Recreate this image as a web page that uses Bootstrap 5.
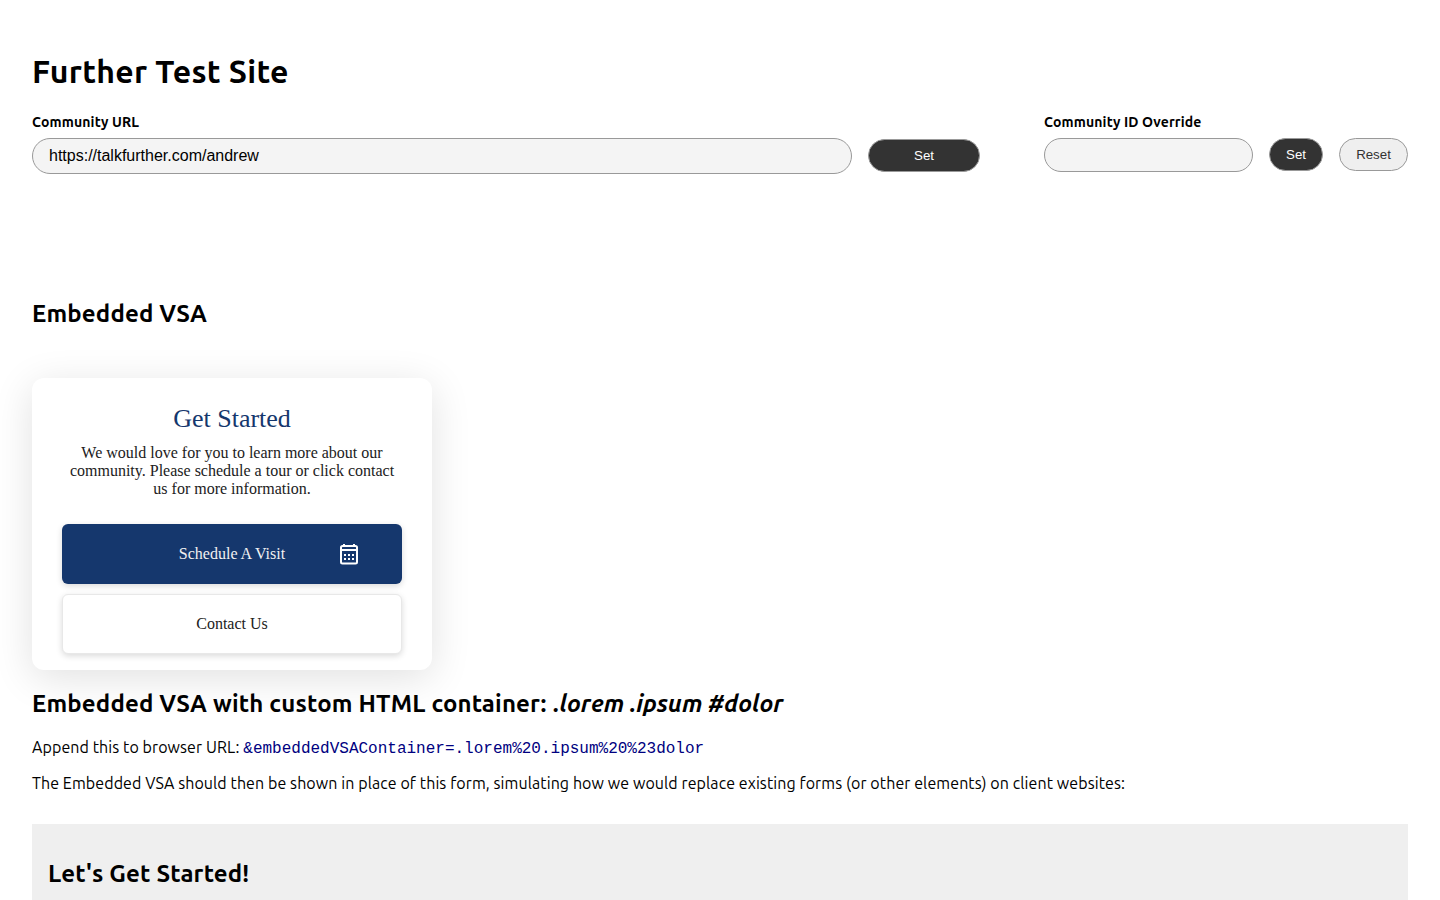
<!DOCTYPE html>
<html lang="en">
<head>
    <meta charset="UTF-8">
    <meta name="viewport" content="width=device-width, initial-scale=1.0">
    <title>Further Test Site</title>
    <link href="https://cdn.jsdelivr.net/npm/bootstrap@5.3.0/dist/css/bootstrap.min.css" rel="stylesheet">
    <style>
        body { font-family: Ubuntu, "Noto Sans", "Open Sans", sans-serif; font-size: 16px; line-height: 24px; color: #000; }
        .site-wrap { padding: 48px 32px 0; }
        .site-title { font-size: 32px; line-height: 46px; font-weight: 700; margin-bottom: 18px; letter-spacing: .3px; }
        .field-label { display: block; font-size: 14px; line-height: 20px; font-weight: 700; margin-bottom: 6px; letter-spacing: .14px; }
        .pill-input { display: block; height: 36px; border: 1px solid #999; border-radius: 18px; background: #f4f4f4; padding: 0 16px; font: 16px/34px "Liberation Sans", sans-serif; color: #000; }
        .url-input { width: 820px; }
        .id-input { width: 209px; height: 34px; }
        .pill-btn { height: 33px; border: 1px solid #999; border-radius: 17px; font: 13.3px/1 "Liberation Sans", sans-serif; padding: 0; }
        .btn-dark-pill { background: #333; color: #fff; }
        .btn-light-pill { background: #efefef; color: #333; }
        .w-set-wide { width: 112px; margin-bottom: 1px; }
        .w-set { width: 54px; }
        .w-reset { width: 69px; }
        .section-title { font-size: 24px; line-height: 32px; font-weight: 700; margin: 0; letter-spacing: .17px; }
        .section-title em { letter-spacing: 0; margin-left: 1px; }
        .vsa-title { margin-top: 124px; margin-bottom: 48px; }
        .vsa-box { width: 400px; height: 292px; background: #fff; border-radius: 12px; padding: 24px 30px 16px; box-shadow: 0 8px 40px rgba(0,0,0,.12); font-family: "Liberation Serif", serif; text-align: center; color: #212121; }
        .vsa-heading { font-size: 26px; line-height: 34px; color: #15376d; margin-bottom: 8px; font-weight: 400; }
        .vsa-text { font-size: 16px; line-height: 18px; margin-bottom: 26px; padding: 0 4px; }
        .vsa-btn { height: 60px; border-radius: 6px; font-size: 16px; position: relative; }
        .vsa-primary { background: #15376d; color: #f1f1f1; margin-bottom: 10px; box-shadow: 0 2px 6px rgba(0,0,0,.15); }
        .vsa-secondary { height: 60px; background: #fff; border: 1px solid #e8e8e8; box-shadow: 0 2px 6px rgba(0,0,0,.15); }
        .vsa-icon { position: absolute; right: 43px; top: 19px; }
        .custom-title { margin-top: 18px; margin-bottom: 15px; }
        .page-text { margin-bottom: 10px; line-height: 24px; letter-spacing: .085px; }
        .mono-url { font-family: "Liberation Mono", monospace; font-size: 16px; color: #000080; letter-spacing: 0; }
        .form-block { background: #efefef; margin-top: 29px; padding: 34px 16px 0; height: 76px; }
    </style>
</head>
<body>
    <div class="site-wrap">
        <h1 class="site-title">Further Test Site</h1>

        <div class="d-flex justify-content-between">
            <div>
                <label class="field-label">Community URL</label>
                <div class="d-flex gap-3 align-items-center">
                    <input class="pill-input url-input" value="https://talkfurther.com/andrew">
                    <button class="pill-btn btn-dark-pill w-set-wide">Set</button>
                </div>
            </div>
            <div>
                <label class="field-label">Community ID Override</label>
                <div class="d-flex gap-3 align-items-start">
                    <input class="pill-input id-input">
                    <button class="pill-btn btn-dark-pill w-set">Set</button>
                    <button class="pill-btn btn-light-pill w-reset">Reset</button>
                </div>
            </div>
        </div>

        <h2 class="section-title vsa-title">Embedded VSA</h2>

        <div class="vsa-box">
            <h3 class="vsa-heading">Get Started</h3>
            <p class="vsa-text">We would love for you to learn more about our community. Please schedule a tour or click contact us for more information.</p>
            <div class="vsa-btn vsa-primary d-flex align-items-center justify-content-center">
                Schedule A Visit
                <svg class="vsa-icon" width="20" height="22" viewBox="0 0 20 22" fill="none" stroke="#fff">
                    <path d="M5 1v3M15 1v3" stroke-width="2"/>
                    <rect x="2" y="3" width="16" height="17.500" rx="1.500" stroke-width="2"/>
                    <path d="M2 7h16" stroke-width="2"/>
                    <path d="M5 12h2M9 12h2M13 12h2M5 16h2M9 16h2M13 16h2" stroke-width="2"/>
                </svg>
            </div>
            <div class="vsa-btn vsa-secondary d-flex align-items-center justify-content-center">Contact Us</div>
        </div>

        <h2 class="section-title custom-title">Embedded VSA with custom HTML container: <em>.lorem .ipsum #dolor</em></h2>
        <p class="page-text">Append this to browser URL: <code class="mono-url">&amp;embeddedVSAContainer=.lorem%20.ipsum%20%23dolor</code></p>
        <p class="page-text">The Embedded VSA should then be shown in place of this form, simulating how we would replace existing forms (or other elements) on client websites:</p>

        <div class="form-block">
            <h2 class="section-title">Let's Get Started!</h2>
        </div>
    </div>
</body>
</html>
